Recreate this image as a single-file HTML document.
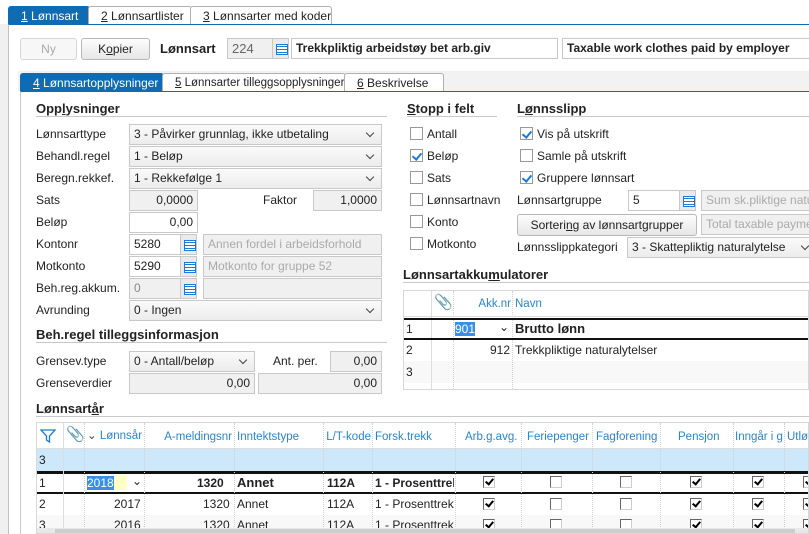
<!DOCTYPE html>
<html><head><meta charset="utf-8"><style>
*{box-sizing:border-box;margin:0;padding:0}
body{width:809px;height:534px;overflow:hidden;background:#f0f0f0;font-family:"Liberation Sans",Arial,sans-serif;font-size:12px;color:#222;position:relative}
.a{position:absolute}
.t{position:absolute;white-space:nowrap;line-height:14px}
.f{position:absolute;border:1px solid #c8c8c8;background:#fff;height:21px;line-height:19px;padding:0 4px;white-space:nowrap;overflow:hidden}
.g{background:#f0f0f0}
.r{text-align:right}
.sel{background:linear-gradient(#fafafa,#ececec)}
.sel:after{content:"";position:absolute;right:8px;top:5px;width:5px;height:5px;border-right:1px solid #444;border-bottom:1px solid #444;transform:rotate(45deg)}
.ic{position:absolute;width:17px;height:21px;border:1px solid #c8c8c8;background:#eaeaea}
.ic:before{content:"";position:absolute;left:3px;top:5px;width:10px;height:9px;border:1px solid #1a7ad4;background:repeating-linear-gradient(#fff 0 1px,#1a7ad4 1px 2px,#fff 2px 3px)}
.h{position:absolute;font-weight:bold;font-size:13px;white-space:nowrap}
.ln{position:absolute;height:1px;background:#c8c8c8}
.cb{position:absolute;width:13px;height:13px;border:1px solid #999;background:#fff}
.cb.k:after{content:"";position:absolute;left:3px;top:1px;width:4px;height:7px;border-right:2px solid #1a7ad4;border-bottom:2px solid #1a7ad4;transform:rotate(40deg)}
.tab{position:absolute;height:18px;line-height:18px;padding-left:12px;white-space:nowrap;border:1px solid #b0b0b0;border-bottom:none;background:#fff;border-radius:3px 3px 0 0}
.tab.on{background:#0f6cb3;color:#fff;border-color:#0f6cb3}
.btn{position:absolute;border:1px solid #b8b8b8;border-radius:3px;background:linear-gradient(#fdfdfd,#e6e6e6);text-align:center;line-height:20px;height:22px}
.gc{position:absolute;border-right:1px dotted #d0d0d0;height:100%;top:0}
.hd{color:#2a85cc;font-size:11.5px}
.gk{position:absolute;width:12px;height:12px;border:1px solid #666;border-right-color:#ccc;border-bottom-color:#ccc;background:#fff}
.gk.k:after{content:"";position:absolute;left:3px;top:0;width:3px;height:6px;border-right:2px solid #000;border-bottom:2px solid #000;transform:rotate(40deg)}
u{text-decoration:underline}
</style></head><body>
<div class="a" style="left:0;top:0;width:809px;height:24px;background:#fff"></div>
<div class="tab on" style="left:8px;top:6px;width:82px"><u>1</u> Lønnsart</div>
<div class="tab" style="left:88px;top:6px;width:104px"><u>2</u> Lønnsartlister</div>
<div class="tab" style="left:190px;top:6px;width:142px"><u>3</u> Lønnsarter med koder</div>
<div class="a" style="left:8px;top:24px;width:801px;height:510px;background:#fff;border-left:1px solid #c0c0c0;border-top:1px solid #0f6cb3"></div>
<div class="btn" style="left:20px;top:38px;width:57px;color:#aaa;border-color:#d6d6d6;background:#f7f7f7">Ny</div>
<div class="btn" style="left:81px;top:38px;width:69px">K<u>o</u>pier</div>
<div class="t" style="left:160px;top:42px;font-weight:bold;font-size:13px">Lønnsart</div>
<div class="f g" style="left:227px;top:38px;width:46px;color:#666;font-size:13px">224</div>
<div class="ic" style="left:272px;top:38px"></div>
<div class="f" style="left:291px;top:38px;width:267px;font-weight:bold;font-size:12px">Trekkpliktig arbeidstøy bet arb.giv</div>
<div class="f" style="left:562px;top:38px;width:250px;font-weight:bold;font-size:12px">Taxable work clothes paid by employer</div>
<div class="a" style="left:18px;top:71px;width:791px;height:20px;background:#f2f2f2"></div>
<div class="tab on" style="left:20px;top:73px;width:144px"><u>4</u> Lønnsartopplysninger</div>
<div class="tab" style="left:162px;top:73px;width:184px;font-size:11.5px"><u>5</u> Lønnsarter tilleggsopplysninger</div>
<div class="tab" style="left:344px;top:73px;width:100px"><u>6</u> Beskrivelse</div>
<div class="a" style="left:20px;top:91px;width:789px;height:443px;background:#fff;border-left:1px solid #c8c8c8;border-top:1px solid #0f6cb3"></div>

<div class="h" style="left:36px;top:101px">Opp<u>l</u>ysninger</div><div class="ln" style="left:36px;top:116px;width:351px"></div>
<div class="t" style="left:36px;top:127px">Lønnsarttype</div><div class="f sel" style="left:129px;top:124px;width:253px">3 - Påvirker grunnlag, ikke utbetaling</div>
<div class="t" style="left:36px;top:149px">Behandl.regel</div><div class="f sel" style="left:129px;top:146px;width:253px">1 - Beløp</div>
<div class="t" style="left:36px;top:171px">Beregn.rekkef.</div><div class="f sel" style="left:129px;top:168px;width:253px">1 - Rekkefølge 1</div>
<div class="t" style="left:36px;top:193px">Sats</div><div class="f g r" style="left:129px;top:190px;width:69px">0,0000</div>
<div class="t" style="left:263px;top:193px">Faktor</div><div class="f g r" style="left:313px;top:190px;width:69px">1,0000</div>
<div class="t" style="left:36px;top:215px">Beløp</div><div class="f r" style="left:129px;top:212px;width:69px">0,00</div>
<div class="t" style="left:36px;top:237px">Kontonr</div><div class="f" style="left:129px;top:234px;width:52px">5280</div><div class="ic" style="left:180px;top:234px"></div><div class="f g" style="left:203px;top:234px;width:179px;color:#aaa">Annen fordel i arbeidsforhold</div>
<div class="t" style="left:36px;top:259px">Motkonto</div><div class="f" style="left:129px;top:256px;width:52px">5290</div><div class="ic" style="left:180px;top:256px"></div><div class="f g" style="left:203px;top:256px;width:179px;color:#aaa">Motkonto for gruppe 52</div>
<div class="t" style="left:36px;top:281px">Beh.reg.akkum.</div><div class="f g" style="left:129px;top:278px;width:52px;color:#888">0</div><div class="ic" style="left:180px;top:278px"></div><div class="f g" style="left:203px;top:278px;width:179px"></div>
<div class="t" style="left:36px;top:303px">Avrunding</div><div class="f sel" style="left:129px;top:300px;width:253px">0 - Ingen</div>
<div class="h" style="left:36px;top:327px">Beh.re<u>g</u>el tilleggsinformasjon</div><div class="ln" style="left:36px;top:342px;width:351px"></div>
<div class="t" style="left:36px;top:354px">Grensev.type</div><div class="f sel" style="left:129px;top:351px;width:126px">0 - Antall/beløp</div>
<div class="t" style="left:273px;top:354px">Ant. per.</div><div class="f g r" style="left:330px;top:351px;width:52px">0,00</div>
<div class="t" style="left:36px;top:376px">Grenseverdier</div><div class="f g r" style="left:129px;top:373px;width:126px">0,00</div><div class="f g r" style="left:258px;top:373px;width:124px">0,00</div>

<div class="h" style="left:407px;top:101px"><u>S</u>topp i felt</div><div class="ln" style="left:407px;top:116px;width:90px"></div>
<div class="cb" style="left:410px;top:127px"></div><div class="t" style="left:427px;top:127px">Antall</div>
<div class="cb k" style="left:410px;top:149px"></div><div class="t" style="left:427px;top:149px">Beløp</div>
<div class="cb" style="left:410px;top:171px"></div><div class="t" style="left:427px;top:171px">Sats</div>
<div class="cb" style="left:410px;top:193px"></div><div class="t" style="left:427px;top:193px">Lønnsartnavn</div>
<div class="cb" style="left:410px;top:215px"></div><div class="t" style="left:427px;top:215px">Konto</div>
<div class="cb" style="left:410px;top:237px"></div><div class="t" style="left:427px;top:237px">Motkonto</div>

<div class="h" style="left:517px;top:101px">L<u>ø</u>nnsslipp</div><div class="ln" style="left:517px;top:116px;width:292px"></div>
<div class="cb k" style="left:520px;top:127px"></div><div class="t" style="left:537px;top:127px">Vis på utskrift</div>
<div class="cb" style="left:520px;top:149px"></div><div class="t" style="left:537px;top:149px">Samle på utskrift</div>
<div class="cb k" style="left:520px;top:171px"></div><div class="t" style="left:537px;top:171px">Gruppere lønnsart</div>
<div class="t" style="left:517px;top:193px">Lønnsartgruppe</div><div class="f" style="left:628px;top:190px;width:52px">5</div><div class="ic" style="left:679px;top:190px"></div><div class="f g" style="left:701px;top:190px;width:120px;color:#aaa">Sum sk.pliktige naturalytelser</div>
<div class="btn" style="left:517px;top:214px;width:180px">Sorteri<u>ng</u> av lønnsartgrupper</div><div class="f g" style="left:701px;top:214px;width:120px;color:#aaa">Total taxable payments</div>
<div class="t" style="left:517px;top:240px">Lønnsslippkategori</div><div class="f sel" style="left:627px;top:237px;width:190px">3 - Skattepliktig naturalytelse</div>

<div class="h" style="left:403px;top:267px">Lønnsartakku<u>m</u>ulatorer</div><div class="ln" style="left:403px;top:282px;width:406px"></div>
<div class="a" style="left:403px;top:290px;width:406px;height:100px;border:1px solid #d8d8d8;overflow:hidden">
 <div class="a" style="left:0;top:70px;width:406px;height:22px;background:#f8f8f8"></div>
 <div class="gc" style="left:27px;border-right:1px solid #ddd"></div><div class="gc" style="left:49px"></div><div class="gc" style="left:108px"></div>
 <div class="a" style="left:0;top:25px;width:406px;height:1px;background:#ddd"></div>
 <div class="t hd" style="left:30px;top:5px;font-size:15px">&#128206;</div>
 <div class="t hd" style="left:50px;width:57px;text-align:right;top:6px">Akk.nr</div><div class="t hd" style="left:111px;top:6px">Navn</div>
 <div class="a" style="left:0;top:27px;width:406px;height:2px;background:#111"></div>
 <div class="a" style="left:0;top:47px;width:406px;height:2px;background:#111"></div>
 <div class="t" style="left:2px;top:31px">1</div><div class="t" style="left:51px;top:31px;background:#3a8ee6;color:#fff">901</div><div class="t" style="left:95px;top:29px">&#8964;</div><div class="t" style="left:111px;top:31px;font-weight:bold;font-size:13px">Brutto lønn</div>
 <div class="t" style="left:2px;top:52px">2</div><div class="t" style="left:86px;top:52px">912</div><div class="t" style="left:111px;top:52px">Trekkpliktige naturalytelser</div>
 <div class="t" style="left:2px;top:74px">3</div>
</div>

<div class="h" style="left:36px;top:401px">Lønnsart<u>å</u>r</div><div class="ln" style="left:36px;top:416px;width:773px"></div>
<div class="a" style="left:36px;top:422px;width:773px;height:112px;border:1px solid #d8d8d8;overflow:hidden">
 <div class="a" style="left:0;top:26px;width:773px;height:22px;background:#cde8fb"></div>
 <div class="a" style="left:0;top:48px;width:773px;height:3px;background:#111"></div>
 <div class="a" style="left:0;top:69px;width:773px;height:2px;background:#111"></div>
 <div class="a" style="left:0;top:92px;width:773px;height:20px;background:#f8f8f8"></div>
 <div class="a" style="left:0;top:25px;width:773px;height:1px;background:#ddd"></div>
 <div class="gc" style="left:26px;border-right:1px solid #ddd"></div><div class="gc" style="left:47px"></div><div class="gc" style="left:107px"></div><div class="gc" style="left:197px"></div><div class="gc" style="left:286px"></div><div class="gc" style="left:335px"></div><div class="gc" style="left:418px"></div><div class="gc" style="left:484px"></div><div class="gc" style="left:555px"></div><div class="gc" style="left:623px"></div><div class="gc" style="left:696px"></div><div class="gc" style="left:747px"></div>
 <svg class="a" style="left:3px;top:5px" width="16" height="16"><path d="M1 2H15L9.5 8V14L6.5 12V8Z" fill="none" stroke="#1a7ad4" stroke-width="1.3"/></svg>
 <div class="t hd" style="left:29px;top:5px;font-size:15px">&#128206;</div>
 <div class="t hd" style="left:50px;top:6px"><span style="color:#444">&#8964;</span> Lønnsår</div>
 <div class="t hd" style="left:108px;width:87px;text-align:right;top:7px">A-meldingsnr</div>
 <div class="t hd" style="left:200px;top:7px">Inntektstype</div>
 <div class="t hd" style="left:287px;width:47px;text-align:right;top:7px">L/T-kode</div>
 <div class="t hd" style="left:338px;top:7px">Forsk.trekk</div>
 <div class="t hd" style="left:428px;top:7px">Arb.g.avg.</div>
 <div class="t hd" style="left:490px;top:7px">Feriepenger</div>
 <div class="t hd" style="left:559px;top:7px">Fagforening</div>
 <div class="t hd" style="left:641px;top:7px">Pensjon</div>
 <div class="t hd" style="left:698px;top:7px;width:48px;overflow:hidden">Inngår i gr</div>
 <div class="t hd" style="left:750px;top:7px">Utløs</div>
 <div class="t" style="left:2px;top:30px">3</div>
 <div class="t" style="left:2px;top:53px">1</div><div class="a" style="left:50px;top:53px;width:40px;height:14px;background:#ffffc8"></div><div class="t" style="left:50px;top:53px;background:#3a8ee6;color:#fff">2018</div><div class="t" style="left:95px;top:51px">&#8964;</div>
 <div class="t" style="left:160px;top:53px;font-weight:bold">1320</div><div class="t" style="left:200px;top:53px;font-weight:bold;font-size:13px">Annet</div><div class="t" style="left:290px;top:53px;font-weight:bold">112A</div><div class="t" style="left:338px;top:53px;font-weight:bold;width:79px;overflow:hidden">1 - Prosenttrekk</div>
 <div class="t" style="left:2px;top:74px">2</div><div class="t" style="left:77px;top:74px">2017</div><div class="t" style="left:166px;top:74px">1320</div><div class="t" style="left:200px;top:74px">Annet</div><div class="t" style="left:290px;top:74px">112A</div><div class="t" style="left:338px;top:74px;width:79px;overflow:hidden">1 - Prosenttrekk</div>
 <div class="t" style="left:2px;top:95px">3</div><div class="t" style="left:77px;top:95px">2016</div><div class="t" style="left:166px;top:95px">1320</div><div class="t" style="left:200px;top:95px">Annet</div><div class="t" style="left:290px;top:95px">112A</div><div class="t" style="left:338px;top:95px;width:79px;overflow:hidden">1 - Prosenttrekk</div>
 <div class="gk k" style="left:446px;top:53px"></div><div class="gk" style="left:513px;top:53px"></div><div class="gk" style="left:583px;top:53px"></div><div class="gk k" style="left:653px;top:53px"></div><div class="gk k" style="left:715px;top:53px"></div><div class="gk k" style="left:766px;top:53px"></div>
 <div class="gk k" style="left:446px;top:75px"></div><div class="gk" style="left:513px;top:75px"></div><div class="gk" style="left:583px;top:75px"></div><div class="gk k" style="left:653px;top:75px"></div><div class="gk k" style="left:715px;top:75px"></div><div class="gk k" style="left:766px;top:75px"></div>
 <div class="gk k" style="left:446px;top:96px"></div><div class="gk" style="left:513px;top:96px"></div><div class="gk" style="left:583px;top:96px"></div><div class="gk k" style="left:653px;top:96px"></div><div class="gk k" style="left:715px;top:96px"></div><div class="gk k" style="left:766px;top:96px"></div>
 <div class="a" style="left:0;top:105px;width:773px;height:7px;background:#e8e8e8"></div>
 <div class="a" style="left:18px;top:106px;width:740px;height:6px;background:#cdcdcd"></div>
</div>
</body></html>
